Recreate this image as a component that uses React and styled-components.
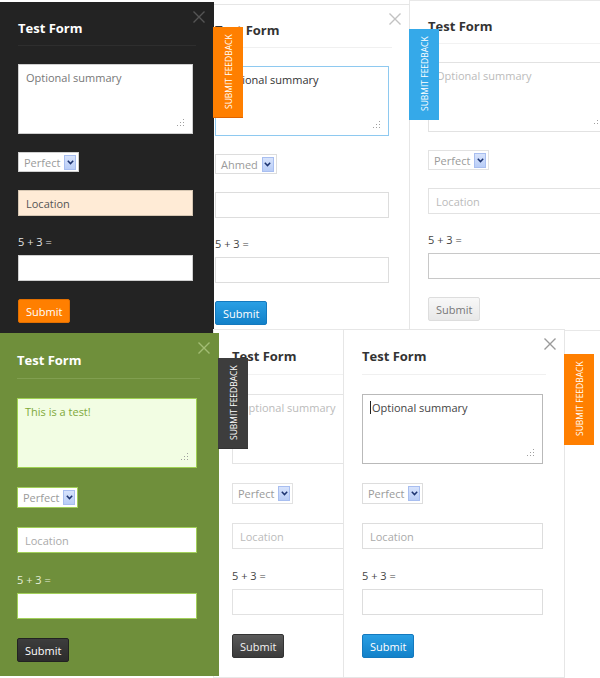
import React from "react";
import styled, { createGlobalStyle, ThemeProvider } from "styled-components";

const GlobalStyle = createGlobalStyle`
  html, body {
    margin: 0;
    padding: 0;
    background: #ffffff;
  }
  body {
    font-family: "Open Sans", "Liberation Sans", sans-serif;
  }
`;

const blueButton = { bg: "linear-gradient(#2a9fe4, #1281c9)", border: "#1479be", color: "#ffffff" };

// one look per form skin
const skins = {
  dark: {
    bg: "#232323",
    edge: "#232323",
    title: "#ffffff",
    rule: "#2e2e2e",
    close: "#555555",
    label: "#e2e2e2",
    area: { bg: "#ffffff", border: "#cfcfcf", color: "#777777" },
    select: "#d0d0d0",
    loc: { bg: "#ffebd6", border: "#d6c6b2", color: "#555555" },
    input: "#cfcfcf",
    button: { bg: "#ff7f00", border: "#e26f00", color: "#ffffff" },
    tab: { bg: "#ff7f00", border: "#e06400" },
  },
  focus: {
    bg: "#ffffff",
    edge: "#e6e6e6",
    title: "#333333",
    rule: "#f0f0f0",
    close: "#c2c2c2",
    label: "#444444",
    area: { bg: "#ffffff", border: "#8ec9f0", color: "#333333" },
    select: "#dddddd",
    loc: { bg: "#ffffff", border: "#dddddd", color: "#aaaaaa" },
    input: "#dddddd",
    button: blueButton,
    tab: { bg: "#35a9e9", border: "#35a9e9" },
  },
  plain: {
    bg: "#ffffff",
    edge: "#e8e8e8",
    title: "#333333",
    rule: "#f2f2f2",
    close: "#c2c2c2",
    label: "#444444",
    area: { bg: "#ffffff", border: "#e2e2e2", color: "#bbbbbb" },
    select: "#e2e2e2",
    loc: { bg: "#ffffff", border: "#e2e2e2", color: "#bbbbbb" },
    input: "#c8c8c8",
    button: { bg: "linear-gradient(#f8f8f8, #e8e8e8)", border: "#dddddd", color: "#777777" },
  },
  green: {
    bg: "#6f8f3b",
    edge: "#6f8f3b",
    title: "#ffffff",
    rule: "#819f50",
    close: "#a3bd74",
    label: "#e6eed8",
    area: { bg: "#f2fde3", border: "#9fd152", color: "#80a83a" },
    select: "#a2d05a",
    loc: { bg: "#ffffff", border: "#a2d05a", color: "#aaaaaa" },
    input: "#a2d05a",
    button: { bg: "linear-gradient(#3d3d3d, #2c2c2c)", border: "#222222", color: "#ffffff" },
    tab: { bg: "#3d3d3d", border: "#333333" },
  },
  graphite: {
    bg: "#ffffff",
    edge: "#e8e8e8",
    title: "#333333",
    rule: "#f2f2f2",
    close: "#c2c2c2",
    label: "#444444",
    area: { bg: "#ffffff", border: "#e4e4e4", color: "#bbbbbb" },
    select: "#e2e2e2",
    loc: { bg: "#ffffff", border: "#e2e2e2", color: "#bbbbbb" },
    input: "#e2e2e2",
    button: { bg: "linear-gradient(#5a5a5a, #3b3b3b)", border: "#333333", color: "#f2f2f2" },
  },
  active: {
    bg: "#ffffff",
    edge: "#e6e6e6",
    title: "#333333",
    rule: "#f0f0f0",
    close: "#9a9a9a",
    label: "#444444",
    area: { bg: "#ffffff", border: "#b9b9b9", color: "#444444" },
    select: "#dddddd",
    loc: { bg: "#ffffff", border: "#dddddd", color: "#aaaaaa" },
    input: "#dddddd",
    button: blueButton,
    tab: { bg: "#ff7f00", border: "#ff7f00" },
  },
};

const Canvas = styled.div`
  position: relative;
  width: 600px;
  height: 678px;
  overflow: hidden;
  background: #ffffff;
`;

// forms lie about on the canvas like windows, so each one is placed by its coordinates
const Panel = styled.section`
  position: absolute;
  left: ${(p) => p.$x}px;
  top: ${(p) => p.$y}px;
  width: ${(p) => p.$w}px;
  height: ${(p) => p.$h}px;
  z-index: ${(p) => p.$z};
  --fw: ${(p) => p.$field}px;
  --g: ${(p) => (p.$roomy ? 19 : 18)}px;
  box-sizing: border-box;
  padding: ${(p) => (p.$roomy ? 16 : 15)}px 0 0 ${(p) => p.$pad}px;
  display: flex;
  flex-direction: column;
  align-items: flex-start;
  background: ${({ theme }) => theme.bg};
  border: 1px solid ${({ theme }) => theme.edge};
`;

const Title = styled.h2`
  margin: 0;
  box-sizing: border-box;
  width: calc(var(--fw) + 3px);
  padding-bottom: ${(p) => (p.$roomy ? 8 : 7)}px;
  border-bottom: 1px solid ${({ theme }) => theme.rule};
  font-size: 13px;
  line-height: 20px;
  font-weight: 700;
  color: ${({ theme }) => theme.title};
`;

const Close = styled.button`
  position: absolute;
  top: 7px;
  right: 7px;
  width: 14px;
  height: 14px;
  padding: 0;
  border: 0;
  background: none;
  color: ${({ theme }) => theme.close};
  display: flex;
`;

const Summary = styled.div`
  position: relative;
  box-sizing: border-box;
  width: var(--fw);
  height: 70px;
  margin-top: var(--g);
  padding: 5px 7px;
  font-size: 11px;
  line-height: 16px;
  background: ${({ theme }) => theme.area.bg};
  border: 1px solid ${({ theme }) => theme.area.border};
  color: ${({ theme }) => theme.area.color};
`;

const Grip = styled.svg`
  position: absolute;
  right: 8px;
  bottom: 7px;
`;

const Caret = styled.span`
  display: inline-block;
  width: 1px;
  height: 13px;
  margin-right: 1px;
  vertical-align: -2px;
  background: #222222;
`;

const Select = styled.div`
  box-sizing: border-box;
  height: ${(p) => (p.$roomy ? 21 : 20)}px;
  margin-top: var(--g);
  padding: 0 2px 0 5px;
  display: flex;
  align-items: center;
  gap: 4px;
  font-size: 11px;
  color: #9a9a9a;
  background: #ffffff;
  border: 1px solid ${({ theme }) => theme.select};
`;

const Arrow = styled.span`
  box-sizing: border-box;
  width: 12px;
  height: 15px;
  display: flex;
  align-items: center;
  justify-content: center;
  background: linear-gradient(#d7e3fc, #b9cdf6);
  border: 1px solid #a8bef0;
`;

const Input = styled.div`
  box-sizing: border-box;
  width: var(--fw);
  height: 26px;
  margin-top: ${(p) => (p.$tight ? "5px" : "var(--g)")};
  padding: 0 7px;
  display: flex;
  align-items: center;
  font-size: 11px;
  background: ${(p) => (p.$loc ? p.theme.loc.bg : "#ffffff")};
  color: ${({ theme }) => theme.loc.color};
  border: 1px solid ${(p) => (p.$loc ? p.theme.loc.border : p.theme.input)};
`;

const Label = styled.div`
  margin-top: var(--g);
  font-size: 11px;
  line-height: 16px;
  color: ${({ theme }) => theme.label};
`;

const Submit = styled.button`
  box-sizing: border-box;
  height: 24px;
  margin-top: var(--g);
  padding: 0 7px;
  font-family: inherit;
  font-size: 11px;
  border-radius: 2px;
  background: ${({ theme }) => theme.button.bg};
  border: 1px solid ${({ theme }) => theme.button.border};
  color: ${({ theme }) => theme.button.color};
`;

const Tab = styled.div`
  position: absolute;
  left: 100%;
  top: 24px;
  box-sizing: border-box;
  width: 30px;
  height: 91px;
  display: flex;
  align-items: center;
  justify-content: center;
  writing-mode: vertical-rl;
  transform: rotate(180deg);
  font-size: 8.5px;
  text-transform: uppercase;
  color: #ffffff;
  background: ${({ theme }) => theme.tab.bg};
  border-top: 1px solid ${({ theme }) => theme.tab.border};
`;

function CloseIcon() {
  return (
    <svg width="14" height="14" viewBox="0 0 14 14">
      <path d="M1.5 1.5 L12.5 12.5 M12.5 1.5 L1.5 12.5" stroke="currentColor" strokeWidth="1.4" />
    </svg>
  );
}

function GripIcon() {
  const dots = [[6, 0], [3, 3], [6, 3], [0, 6], [3, 6], [6, 6]];
  return (
    <Grip width="7" height="7" viewBox="0 0 7 7">
      {dots.map(([x, y]) => (
        <rect key={`${x}-${y}`} x={x} y={y} width="1" height="1" fill="#a0a0a0" />
      ))}
    </Grip>
  );
}

function Chevron() {
  return (
    <svg width="7" height="5" viewBox="0 0 7 5">
      <path d="M0.8 0.8 L3.5 3.6 L6.2 0.8" fill="none" stroke="#1d3470" strokeWidth="1.5" />
    </svg>
  );
}

function FeedbackForm({ skin, x, y, w, h, z, pad, field, roomy, summary, caret, choice = "Perfect", location = "Location", close = true, tab }) {
  return (
    <ThemeProvider theme={skins[skin]}>
      <Panel $x={x} $y={y} $w={w} $h={h} $z={z} $pad={pad} $field={field} $roomy={roomy}>
        <Title $roomy={roomy}>Test Form</Title>
        {close && (
          <Close aria-label="Close">
            <CloseIcon />
          </Close>
        )}
        <Summary>
          {caret && <Caret />}
          {summary}
          <GripIcon />
        </Summary>
        <Select $roomy={roomy}>
          {choice}
          <Arrow>
            <Chevron />
          </Arrow>
        </Select>
        <Input $loc>{location}</Input>
        <Label>5 + 3 =</Label>
        <Input $tight />
        <Submit>Submit</Submit>
        {tab && <Tab>Submit Feedback</Tab>}
      </Panel>
    </ThemeProvider>
  );
}

export default function App() {
  return (
    <>
      <GlobalStyle />
      <Canvas>
        <FeedbackForm skin="plain" x={409} y={0} w={220} h={331} z={1} pad={18} field={182} summary="Optional summary" close={false} />
        <FeedbackForm skin="focus" x={196} y={4} w={214} h={326} z={2} pad={18} field={174} summary="Optional summary" choice="Ahmed" location="" tab />
        <FeedbackForm skin="dark" x={0} y={2} w={214} h={332} z={3} pad={17} field={175} summary="Optional summary" tab />
        <FeedbackForm skin="graphite" x={213} y={329} w={200} h={349} z={4} pad={18} field={180} roomy summary="Optional summary" close={false} />
        <FeedbackForm skin="active" x={343} y={329} w={222} h={349} z={5} pad={18} field={181} roomy summary="Optional summary" caret tab />
        <FeedbackForm skin="green" x={-1} y={333} w={220} h={343} z={6} pad={17} field={180} roomy summary="This is a test!" tab />
      </Canvas>
    </>
  );
}
